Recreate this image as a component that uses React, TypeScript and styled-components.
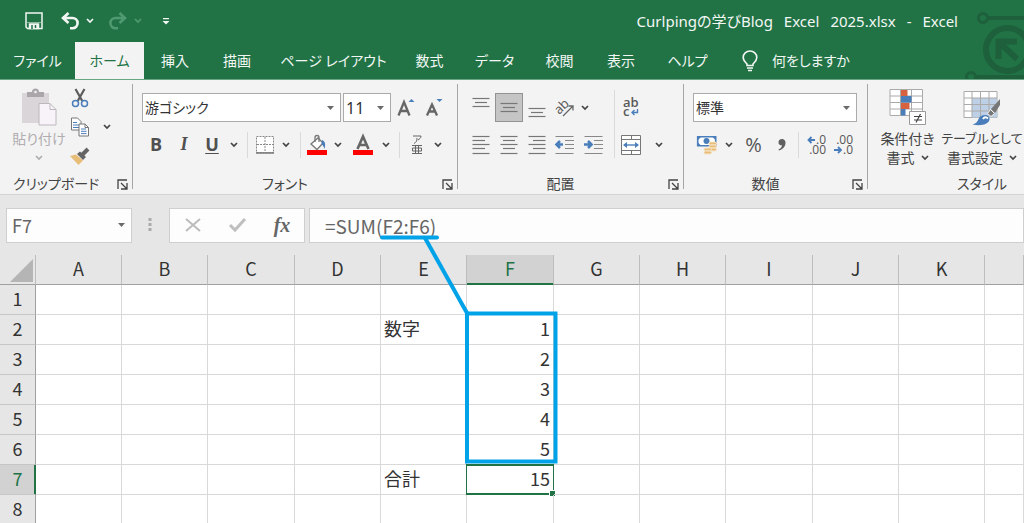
import React from "react";
import styled, { createGlobalStyle, css } from "styled-components";

const GREEN = "#217346";
const UI_FONT = `"Noto Sans", "Noto Sans CJK JP", sans-serif`;
const SHEET_FONT = `"Noto Sans CJK JP", sans-serif`;

const GlobalStyle = createGlobalStyle`
  *, *::before, *::after { box-sizing: border-box; }
  body { margin: 0; font-family: ${UI_FONT}; font-size: 14px; color: #333; }
  button, input, select { font: inherit; color: inherit; font-feature-settings: inherit; }
`;

const Window = styled.div`
  position: relative;
  display: flex;
  flex-direction: column;
  height: 100vh;
  overflow: hidden;
  background: #fff;
  font-feature-settings: "palt";
`;

/* ---------- header ---------- */

const Header = styled.header`
  position: relative;
  flex: none;
  background: ${GREEN};
  color: #f2f7f4;
  border-bottom: 1px solid #6aa583;
`;

const Decoration = styled.svg`
  position: absolute;
  right: 0;
  top: 0;
`;

const TitleBar = styled.div`
  display: flex;
  align-items: center;
  gap: 8px;
  height: 42px;
  padding: 0 66px 0 16px;
`;

const SplitButton = styled.div`
  display: flex;
  height: 100%;
`;

const DocumentTitle = styled.h1`
  display: flex;
  gap: 11px;
  margin: 0 0 0 auto;
  font-size: 15px;
  line-height: 20px;
  font-weight: 400;
  white-space: nowrap;
`;

const TabRow = styled.nav`
  position: relative;
  display: flex;
  height: 37px;
`;

const Tab = styled.button<{ $width: number; $active?: boolean }>`
  width: ${(p) => p.$width}px;
  padding: 0;
  border: 0;
  background: ${(p) => (p.$active ? "#f3f3f3" : "transparent")};
  color: ${(p) => (p.$active ? GREEN : "inherit")};
  line-height: 20px;
  white-space: nowrap;
`;

const TellMe = styled.button`
  display: flex;
  align-items: center;
  gap: 14px;
  margin-left: 19px;
  padding: 0;
  border: 0;
  background: transparent;
  line-height: 20px;
`;

/* ---------- ribbon ---------- */

const Ribbon = styled.section`
  flex: none;
  display: flex;
  height: 115px;
  padding-top: 4px;
  background: #f3f3f3;
  border-bottom: 1px solid #d4d4d4;
  overflow: hidden;
`;

const Group = styled.div<{ $width: number }>`
  flex: none;
  display: flex;
  flex-direction: column;
  justify-content: space-between;
  width: ${(p) => p.$width}px;
  padding: 4px 0 1px;
`;

const GroupDivider = styled.div`
  flex: none;
  width: 1px;
  height: 105px;
  background: #a6a6a6;
`;

const GroupFooter = styled.div<{ $launcher: boolean }>`
  display: grid;
  grid-template-columns: ${(p) => (p.$launcher ? "1fr 20px" : "1fr")};
  align-items: center;
  height: 18px;
  line-height: 18px;
  text-align: center;
  white-space: nowrap;
  color: #444;
`;

const Stack = styled.div<{ $left?: number }>`
  display: flex;
  flex-direction: column;
  gap: 10px;
  padding: 5px 0 0 ${(p) => p.$left ?? 9}px;
`;

const Row = styled.div<{ $height?: number; $gap?: number }>`
  display: flex;
  align-items: center;
  gap: ${(p) => p.$gap ?? 0}px;
  height: ${(p) => p.$height ?? 26}px;
`;

const Columns = styled.div`
  display: flex;
`;

const ToolButton = styled.button<{ $width: number; $pressed?: boolean }>`
  flex: none;
  display: flex;
  align-items: center;
  justify-content: center;
  width: ${(p) => p.$width}px;
  height: 100%;
  padding: 0;
  border: 0;
  background: transparent;
  color: #505050;
  ${(p) =>
    p.$pressed &&
    css`
      background: #c5c5c5;
      border: 1px solid #929292;
    `}

  > svg {
    flex: none;
    overflow: visible;
  }
`;

const Letter = styled.span<{ $italic?: boolean; $underline?: boolean }>`
  padding-bottom: 2px;
  font-family: "Open Sans", sans-serif;
  font-size: 18px;
  line-height: 22px;
  font-weight: 700;
  ${(p) => p.$italic && `font-family: "Liberation Serif", serif; font-style: italic;`}
  ${(p) => p.$underline && "text-decoration: underline; text-underline-offset: 2px;"}
`;

const ToolDivider = styled.span<{ $height?: number }>`
  flex: none;
  align-self: flex-end;
  width: 1px;
  height: ${(p) => p.$height ?? 26}px;
  margin: 0 5px;
  background: #dadada;
`;

const SelectBox = styled.label<{ $width: number }>`
  display: grid;
  align-items: center;
  width: ${(p) => p.$width}px;
  height: 29px;
  background: #fff;
  border: 1px solid #ababab;
  color: #333;

  > * {
    grid-area: 1 / 1;
  }
  > svg {
    justify-self: end;
    margin-right: 6px;
    pointer-events: none;
  }
`;

const Select = styled.select<{ $large?: boolean }>`
  appearance: none;
  width: 100%;
  height: 100%;
  padding: 0 2px;
  border: 0;
  background: transparent;
  font-size: ${(p) => (p.$large ? 16 : 14)}px;
`;

const BigButton = styled.button<{ $width: number; $disabled?: boolean }>`
  flex: none;
  display: flex;
  flex-direction: column;
  align-items: center;
  width: ${(p) => p.$width}px;
  padding: 0;
  border: 0;
  background: transparent;
  line-height: 19px;
  color: ${(p) => (p.$disabled ? "#b0acb0" : "#444")};
  white-space: nowrap;

  > svg {
    margin-bottom: 3px;
  }
`;

const Caption = styled.span<{ $compact?: boolean }>`
  display: flex;
  align-items: center;
  gap: 6px;
  min-height: 19px;
  font-size: ${(p) => (p.$compact ? 13 : 14)}px;
`;

const ClipboardGroup = styled(Columns)`
  padding-left: 8px;
`;

const ClipboardTools = styled.div`
  display: flex;
  flex-direction: column;
`;

/* ---------- formula bar ---------- */

const FormulaBar = styled.section`
  flex: none;
  display: flex;
  align-items: center;
  height: 60px;
  padding-left: 6px;
  background: #e6e6e6;
  color: #666;
  font-family: ${SHEET_FONT};
`;

const FieldBox = styled.label<{ $width?: number }>`
  display: flex;
  align-items: center;
  ${(p) => (p.$width ? `flex: none; width: ${p.$width}px;` : "flex: 1; border-right: 0;")}
  height: 35px;
  background: #fdfdfd;
  border: 1px solid #cfcfcf;
  padding-right: 6px;
`;

const Field = styled.input<{ $indent: number; $large?: boolean }>`
  flex: 1;
  min-width: 0;
  height: 100%;
  padding: 0 0 0 ${(p) => p.$indent}px;
  border: 0;
  background: transparent;
  font-size: ${(p) => (p.$large ? 19 : 18)}px;
  font-feature-settings: normal;
`;

const Handle = styled.svg`
  flex: none;
  margin: 0 17px 0 16px;
`;

const FormulaButtons = styled.div`
  flex: none;
  display: flex;
  width: 136px;
  height: 35px;
  margin-right: 4px;
  background: #fdfdfd;
  border: 1px solid #cfcfcf;
`;

const FunctionGlyph = styled.span`
  font: italic 700 20px/24px "Liberation Serif", serif;
  color: #666;
`;

/* ---------- sheet ---------- */

const SheetArea = styled.main`
  flex: 1;
  min-height: 0;
  overflow: hidden;
  background: #fff;
`;

const Sheet = styled.table`
  width: 100%;
  table-layout: fixed;
  border-collapse: separate;
  border-spacing: 0;
  font-family: ${SHEET_FONT};
  font-size: 18px;
  line-height: 24px;
  font-feature-settings: normal;
  color: #333;
`;

const ColumnHead = styled.th<{ $active?: boolean }>`
  height: 30px;
  padding: 0 0 4px;
  font-weight: 400;
  background: ${(p) => (p.$active ? "#d2d2d2" : "#e6e6e6")};
  color: ${(p) => (p.$active ? GREEN : "#333")};
  border-right: 1px solid #bdbdbd;
  border-bottom: 1px solid ${(p) => (p.$active ? GREEN : "#a0a0a0")};
  ${(p) => p.$active && `box-shadow: inset 0 -1px ${GREEN};`}
`;

const Corner = styled.td`
  padding: 0 2px 2px 0;
  background: #e6e6e6;
  border-right: 1px solid #bdbdbd;
  border-bottom: 1px solid #a0a0a0;
  vertical-align: bottom;

  > svg {
    display: block;
    margin-left: auto;
  }
`;

const RowHead = styled.th<{ $active?: boolean }>`
  height: 30px;
  padding: 0 0 4px;
  font-weight: 400;
  background: ${(p) => (p.$active ? "#d2d2d2" : "#e6e6e6")};
  color: ${(p) => (p.$active ? GREEN : "#333")};
  border-right: 1px solid ${(p) => (p.$active ? GREEN : "#a0a0a0")};
  border-bottom: 1px solid #c6c6c6;
  ${(p) => p.$active && `box-shadow: inset -1px 0 ${GREEN};`}
`;

const Cell = styled.td<{ $number?: boolean; $selected?: boolean }>`
  position: relative;
  height: 30px;
  padding: 0 3px 4px;
  text-align: ${(p) => (p.$number ? "right" : "left")};
  border-right: 1px solid #d9d9d9;
  border-bottom: 1px solid #d9d9d9;
  ${(p) =>
    p.$selected &&
    css`
      &::before {
        content: "";
        position: absolute;
        inset: -1px;
        border: 2px solid ${GREEN};
        border-width: 2px 1px;
      }
      &::after {
        content: "";
        position: absolute;
        right: -2px;
        bottom: -2px;
        width: 5px;
        height: 5px;
        background: ${GREEN};
        outline: 1px solid #fff;
      }
    `}
`;

const Annotation = styled.svg`
  position: absolute;
  left: 0;
  top: 0;
  pointer-events: none;
`;

/* ---------- icons ---------- */

const Chevron = ({ color = "#444" }: { color?: string }) => (
  <svg width="8" height="6" viewBox="0 0 8 6" fill="none" stroke={color} strokeWidth="1.7">
    <path d="M1 1l3 3 3-3" />
  </svg>
);

const Triangle = () => (
  <svg width="7" height="4" viewBox="0 0 7 4" fill="#6a6a6a">
    <path d="M0 0h7L3.500 4z" />
  </svg>
);

const SaveIcon = () => (
  <svg width="18" height="18" viewBox="0 0 18 18" fill="none" stroke="#f2f7f4" strokeWidth="1.500">
    <path d="M1 1h16v15.500H2.500L1 15z" />
    <path d="M2 10h14v1H2z" strokeWidth="1" stroke="none" fill="#8fb9a1" />
    <path d="M4.500 12h9v4.500h-9z" fill="#f2f7f4" />
    <path d="M7 13v4M10.500 13v3" stroke={GREEN} />
  </svg>
);

const UndoIcon = ({ color, flip }: { color: string; flip?: boolean }) => (
  <svg width="20" height="18" viewBox="0 0 20 18" fill="none" stroke={color} strokeWidth="2.600">
    <g transform={flip ? "matrix(-1 0 0 1 20 0)" : undefined}>
      <path d="M8.500 1L3 6l5.500 5M3 6h9.500a5 5 0 0 1 0 10.200H10" />
    </g>
  </svg>
);

const BulbIcon = () => (
  <svg width="16" height="22" viewBox="0 0 16 22" fill="none" stroke="#f2f7f4" strokeWidth="1.600">
    <path d="M5 15.500V14C3 12 1.200 10.500 1.200 7.500a6.800 6.500 0 0 1 13.600 0C14.800 10.500 13 12 11 14v1.500zM5 18h6M6 20.500h4" />
  </svg>
);

const PasteIcon = () => (
  <svg width="36" height="38" viewBox="0 0 36 38">
    <path d="M1 5h27v30H1z" fill="#d9d5d9" />
    <path d="M6 9V4h5a3.500 3.500 0 0 1 7 0h5v5z" fill="#aaa6aa" />
    <circle cx="14.500" cy="4" r="1.300" fill="#f3f3f3" />
    <path d="M18 15.500h11l6 6V37H18z" fill="#f8f3f9" stroke="#bcb8bc" />
    <path d="M29 15.500v6h6" fill="none" stroke="#bcb8bc" />
  </svg>
);

const CutIcon = () => (
  <svg width="18" height="20" viewBox="0 0 18 20" fill="none">
    <path d="M4.500 1l6.800 12M13.500 1L6.700 13" stroke="#5c5c5c" strokeWidth="2.200" />
    <circle cx="4.500" cy="15.500" r="3" stroke="#4a7ebb" strokeWidth="1.500" />
    <circle cx="13.500" cy="15.500" r="3" stroke="#4a7ebb" strokeWidth="1.500" />
  </svg>
);

const CopyIcon = () => (
  <svg width="18" height="20" viewBox="0 0 18 20" fill="#fff" stroke="#777">
    <path d="M.5 1h6l3.500 3.500V13H.5z" />
    <path d="M2 5.500h4M2 8h6M2 10.500h6" stroke="#4a7ebb" />
    <path d="M8 7h6l3.500 3.500V19H8z" />
    <path d="M14 7v3.500h3.500" fill="none" />
    <path d="M10 12h5M10 14.300h5.500M10 16.600h5.500" stroke="#4a7ebb" />
  </svg>
);

const BrushIcon = () => (
  <svg width="20" height="18" viewBox="0 0 20 18">
    <path d="M0 9l6-1.500 7 6L8.500 18z" fill="#e8bd78" />
    <path d="M7 7l3-2.500 6 5.500-3 3z" fill="#646464" />
    <path d="M12 8l6-6" stroke="#646464" strokeWidth="4" />
  </svg>
);

const LauncherIcon = () => (
  <svg width="11" height="11" viewBox="0 0 11 11" fill="none" stroke="#444" strokeWidth="1.300">
    <path d="M1 10V1h9M4 4l5.500 5.500M10 4v6H4" />
  </svg>
);

const BordersIcon = () => (
  <svg width="18" height="18" viewBox="0 0 18 18" fill="none" stroke="#888">
    <path d="M.5.500h17v16H.5zM9 1v15M1 8.500h16" fill="#fff" strokeDasharray="2 1" />
    <path d="M0 17h18" stroke="#777" strokeWidth="1.500" />
  </svg>
);

const FillIcon = () => (
  <svg width="20" height="20" viewBox="0 0 20 20" fill="none">
    <path d="M4 9l7-6 5 5-6 6.500z" fill="#fff" stroke="#777" strokeWidth="1.300" />
    <path d="M8 7V2.500a2 2 0 0 1 4 0V7" stroke="#777" strokeWidth="1.300" />
    <path d="M15 5c3 1 4 4 2.500 9-1-3-2-4-3-5z" fill="#4a7ebb" />
    <path d="M0 15h20v5H0z" fill="#f00" />
  </svg>
);

const FontColorIcon = () => (
  <svg width="20" height="20" viewBox="0 0 20 20">
    <path d="M4.500 14L10 1.500 15.500 14M6.500 10h7" fill="none" stroke="#666" strokeWidth="2.600" />
    <path d="M0 15h20v5H0z" fill="#f00" />
  </svg>
);

const FontSizeIcon = ({ grow }: { grow?: boolean }) => (
  <svg width="18" height="20" viewBox="0 0 18 20">
    <path
      d={grow ? "M1.500 17.500L7 4l5.500 13.500M3.500 13h7" : "M2 17.500L7 6.500l5 11M4 13.500h6"}
      fill="none"
      stroke="#666"
      strokeWidth="2.300"
    />
    <path d={grow ? "M11.500 4h6l-3-3z" : "M11.500 1h6l-3 3z"} fill="#4a7ebb" />
  </svg>
);

const PhoneticIcon = () => (
  <svg width="12" height="20" viewBox="0 0 12 20" fill="none" stroke="#666">
    <path d="M2 1h8c0 2-1.500 3-3 4M6 3c0 3-.5 4-3 5.500M1 10.500h10M1 18.500h10M1.500 13h9v3h-9zM4.500 10.500v8M7.500 10.500v8" />
  </svg>
);

type Line = [number, number, number];

const LinesIcon = ({ lines }: { lines: Line[] }) => (
  <svg width="18" height="20" viewBox="0 0 18 20" fill="none" stroke="#777" strokeWidth="1.200">
    {lines.map(([x1, x2, y]) => (
      <path key={y} d={`M${x1} ${y}H${x2}`} />
    ))}
  </svg>
);

const paragraph = (x1: number, x2: number): Line[] =>
  [1.5, 5.5, 9.5, 13.5, 18.5].map((y, i) => (i % 2 ? [x1, x2, y] : [0.5, 17.5, y]));

const IndentIcon = ({ increase }: { increase?: boolean }) => (
  <svg width="20" height="20" viewBox="0 0 20 20" fill="none" stroke="#888" strokeWidth="1.200">
    <path d="M.5 1.500h18M10 5.500h9M10 9.500h9M10 13.500h9M.5 18.500h18" />
    <path d={increase ? "M0 9.500h7M4 6l3.500 3.500L4 13" : "M1 9.500h7M5 6L1.500 9.500 5 13"} stroke="#4a7ebb" strokeWidth="2.600" />
  </svg>
);

const OrientationIcon = () => (
  <svg width="20" height="20" viewBox="0 0 20 20" fill="none" stroke="#666">
    <text x="0" y="13" transform="rotate(-45 7 10)" fontFamily="Open Sans" fontSize="13" fill="#555" stroke="none">
      ab
    </text>
    <path d="M8 18L18 8M13.500 8H18v4.500" strokeWidth="1.300" />
  </svg>
);

const WrapIcon = () => (
  <svg width="18" height="20" viewBox="0 0 18 20" fontFamily="Open Sans" fontSize="13" fontWeight="600" fill="#5a5a5a">
    <text x="1" y="9">ab</text>
    <text x="1" y="18">c</text>
    <path d="M15.500 11v3.500H10M12.500 12L10 14.500l2.500 2.500" fill="none" stroke="#4a7ebb" strokeWidth="1.400" />
  </svg>
);

const MergeIcon = () => (
  <svg width="20" height="20" viewBox="0 0 20 20" fill="#fff" stroke="#777">
    <path d="M.5.500h19v19H.5zM.5 4.500h19M.5 15.500h19M10.500.500v4M10.500 15.500v4" />
    <path d="M3 10h14" stroke="#4a7ebb" strokeWidth="1.400" />
    <path d="M2 10l4-3v6zM18 10l-4-3v6z" fill="#4a7ebb" stroke="none" />
  </svg>
);

const CurrencyIcon = () => (
  <svg width="20" height="20" viewBox="0 0 20 20">
    <path d="M.7 1.700h18v9H.7z" fill="#fff" stroke="#4a7ebb" strokeWidth="1.600" />
    <path d="M1 2h3L1 5zM18.500 2h-3l3 3zM1 10.500h3l-3-3z" fill="#4a7ebb" />
    <circle cx="9.500" cy="6" r="3" fill="#4a7ebb" />
    <g fill="#e8bd78" stroke="#f7e6cb">
      <rect x="12" y="7" width="7.500" height="3" rx="1.500" />
      <rect x="12" y="10" width="7.500" height="3" rx="1.500" />
      <rect x="12" y="13" width="7.500" height="3" rx="1.500" />
      <rect x="7" y="13" width="7.500" height="3" rx="1.500" />
      <rect x="7" y="16" width="7.500" height="3" rx="1.500" />
    </g>
  </svg>
);

const PercentGlyph = styled.span`
  font: 400 20px/24px "Open Sans", sans-serif;
  color: #555;
`;

const CommaIcon = () => (
  <svg width="8" height="12" viewBox="0 0 8 12" fill="#606060">
    <path d="M4 0a3.500 3.500 0 0 0-3.500 3.500C.5 5.500 2 6.500 4 6.300 3.700 8.500 2.500 9.700.5 10.500l.5 1C5 10.300 7.500 7.500 7.500 3.800 7.500 1.500 6 0 4 0z" />
  </svg>
);

const DecimalIcon = ({ increase }: { increase?: boolean }) => (
  <svg width="20" height="20" viewBox="0 0 20 20" fontFamily="Open Sans" fontSize="12" fill="#555">
    <text x="19" y="9" textAnchor="end">{increase ? ".0" : ".00"}</text>
    <text x="19" y="19" textAnchor="end">{increase ? ".00" : ".0"}</text>
    <path
      d={increase ? "M1 5h7M4.500 2L1.500 5l3 3" : "M0 15h7M4 12l3 3-3 3"}
      fill="none"
      stroke="#4a7ebb"
      strokeWidth="1.800"
    />
  </svg>
);

const ConditionalIcon = () => (
  <svg width="38" height="38" viewBox="0 0 38 38" fill="none" stroke="#aaa">
    <path d="M1 1.500h32.500v26H1z" fill="#fff" />
    <path d="M1 8h32M1 14.500h32M1 21h32M11.500 1v26M22.500 1v26" />
    <path d="M12 2h6.500v6H12zM12 15h8.500v6H12z" fill="#d6623f" stroke="none" />
    <path d="M12 8h10.500v6.500H12zM12 21h4.500v6.500H12z" fill="#4a7ebb" stroke="none" />
    <path d="M20.500 23.500h16v13h-16z" fill="#fff" stroke="#999" />
    <path d="M25 28.500h8M25 32h8M31.500 26l-4.500 8.500" stroke="#444" strokeWidth="1.200" />
  </svg>
);

const TableStyleIcon = () => (
  <svg width="38" height="38" viewBox="0 0 38 38" fill="none" stroke="#aaa">
    <path d="M1 3.500h33v26H1z" fill="#fff" />
    <path d="M9 10h25v19.500H9z" fill="#bdd0e6" stroke="none" />
    <path d="M1 10h33M1 16.500h33M1 23h33M9 3v26M17.500 3v26M26 3v26" />
    <path d="M37 11l-9 10 4 4 5-8z" fill="#777" stroke="none" />
    <path d="M27.500 21.500l-3 4 3.500 3 3.500-3z" fill="#777" stroke="#f3f3f3" />
    <path d="M22 27c3 0 5 2 4.500 4.500C25.500 37 17 38 9.500 36.500c4-1 5-3 6-5.500 1-3 3.500-4 6.500-4z" fill="#4a7ebb" stroke="none" />
    <path d="M20 31c1-2 3-2.500 5-.5" stroke="#fff" strokeWidth="1.800" />
  </svg>
);

/* ---------- data ---------- */

const TITLE_PARTS = ["Curlpingの学びBlog", "Excel", "2025.xlsx", "-", "Excel"];

const TABS = [
  { label: "ファイル", width: 75 },
  { label: "ホーム", width: 69 },
  { label: "挿入", width: 62 },
  { label: "描画", width: 62 },
  { label: "ページ レイアウト", width: 131 },
  { label: "数式", width: 61 },
  { label: "データ", width: 69 },
  { label: "校閲", width: 61 },
  { label: "表示", width: 62 },
  { label: "ヘルプ", width: 71 },
];

const COLUMNS = [
  { name: "A", width: 86 },
  { name: "B", width: 86 },
  { name: "C", width: 87 },
  { name: "D", width: 86 },
  { name: "E", width: 86 },
  { name: "F", width: 87 },
  { name: "G", width: 86 },
  { name: "H", width: 86 },
  { name: "I", width: 87 },
  { name: "J", width: 86 },
  { name: "K", width: 86 },
];

const ROWS = [1, 2, 3, 4, 5, 6, 7, 8];

const VALUES: Record<string, string | number> = {
  E2: "数字",
  F2: 1,
  F3: 2,
  F4: 3,
  F5: 4,
  F6: 5,
  E7: "合計",
  F7: 15,
};

const Footer = ({ name, launcher = true }: { name: string; launcher?: boolean }) => (
  <GroupFooter $launcher={launcher}>
    <span>{name}</span>
    {launcher && (
      <ToolButton $width={20} aria-label={`${name}の設定`}>
        <LauncherIcon />
      </ToolButton>
    )}
  </GroupFooter>
);

const Drop = ({ width, label, color }: { width: number; label: string; color?: string }) => (
  <ToolButton $width={width} aria-label={label}>
    <Chevron color={color} />
  </ToolButton>
);

export default function App() {
  return (
    <Window>
      <GlobalStyle />
      <Header>
        <Decoration width="62" height="79" viewBox="0 0 62 79" fill="none" stroke="#1d603b" strokeWidth="4">
          <circle cx="21" cy="18" r="4.500" strokeWidth="3" />
          <path d="M26 18h36M14 77h48" />
          <circle cx="9" cy="77" r="4.500" strokeWidth="3" />
          <circle cx="45.500" cy="49.500" r="21.500" strokeWidth="6" />
          <path d="M36.500 59V41.500H55M37 42l18 17" strokeWidth="6" />
        </Decoration>
        <TitleBar>
          <ToolButton $width={36} aria-label="上書き保存"><SaveIcon /></ToolButton>
          <SplitButton>
            <ToolButton $width={20} aria-label="元に戻す"><UndoIcon color="#f2f7f4" /></ToolButton>
            <Drop width={20} label="元に戻す操作の選択" color="#f2f7f4" />
          </SplitButton>
          <SplitButton>
            <ToolButton $width={20} aria-label="やり直し"><UndoIcon color="#4f9a70" flip /></ToolButton>
            <Drop width={20} label="やり直す操作の選択" color="#4f9a70" />
          </SplitButton>
          <ToolButton $width={20} aria-label="クイック アクセス ツール バーのユーザー設定">
            <svg width="8" height="7" viewBox="0 0 8 7" fill="#f2f7f4">
              <path d="M1 0h6v1.300H1zM.500 3h7L4 6.500z" />
            </svg>
          </ToolButton>
          <DocumentTitle>
            {TITLE_PARTS.map((part, i) => (
              <span key={i}>{part}</span>
            ))}
          </DocumentTitle>
        </TitleBar>
        <TabRow>
          {TABS.map((t) => (
            <Tab key={t.label} $width={t.width} $active={t.label === "ホーム"}>
              {t.label}
            </Tab>
          ))}
          <TellMe>
            <BulbIcon />
            何をしますか
          </TellMe>
        </TabRow>
      </Header>

      <Ribbon>
        <Group $width={132}>
          <ClipboardGroup>
            <BigButton $width={62} $disabled>
              <PasteIcon />
              <Caption>貼り付け</Caption>
              <Caption><Chevron color="#b0acb0" /></Caption>
            </BigButton>
            <ClipboardTools>
              <Row $height={20}>
                <ToolButton $width={20} aria-label="切り取り"><CutIcon /></ToolButton>
              </Row>
              <Row $height={38}>
                <ToolButton $width={20} aria-label="コピー"><CopyIcon /></ToolButton>
                <Drop width={34} label="コピーのオプション" />
              </Row>
              <Row $height={20}>
                <ToolButton $width={20} aria-label="書式のコピー"><BrushIcon /></ToolButton>
              </Row>
            </ClipboardTools>
          </ClipboardGroup>
          <Footer name="クリップボード" />
        </Group>
        <GroupDivider />

        <Group $width={324}>
          <Stack>
            <Row $height={29} $gap={2}>
              <SelectBox $width={199}>
                <Select aria-label="フォント"><option>游ゴシック</option></Select>
                <Triangle />
              </SelectBox>
              <SelectBox $width={48}>
                <Select $large aria-label="フォント サイズ"><option>11</option></Select>
                <Triangle />
              </SelectBox>
              <ToolButton $width={26} aria-label="フォント サイズの拡大"><FontSizeIcon grow /></ToolButton>
              <ToolButton $width={26} aria-label="フォント サイズの縮小"><FontSizeIcon /></ToolButton>
            </Row>
            <Row>
              <ToolButton $width={28} aria-label="太字"><Letter>B</Letter></ToolButton>
              <ToolButton $width={28} aria-label="斜体"><Letter $italic>I</Letter></ToolButton>
              <ToolButton $width={28} aria-label="下線"><Letter $underline>U</Letter></ToolButton>
              <Drop width={16} label="下線の種類" />
              <ToolDivider />
              <ToolButton $width={24} aria-label="罫線"><BordersIcon /></ToolButton>
              <Drop width={18} label="罫線の種類" />
              <ToolDivider />
              <ToolButton $width={22} aria-label="塗りつぶしの色"><FillIcon /></ToolButton>
              <Drop width={20} label="塗りつぶしの色の選択" />
              <ToolButton $width={30} aria-label="フォントの色"><FontColorIcon /></ToolButton>
              <Drop width={16} label="フォントの色の選択" />
              <ToolDivider />
              <ToolButton $width={24} aria-label="ふりがな"><PhoneticIcon /></ToolButton>
              <Drop width={18} label="ふりがなの設定" />
            </Row>
          </Stack>
          <Footer name="フォント" />
        </Group>
        <GroupDivider />

        <Group $width={225}>
          <Columns>
            <Stack>
              <Row $height={29}>
                <ToolButton $width={28} aria-label="上揃え">
                  <LinesIcon lines={[[0.5, 17.5, 0.5], [3, 15, 4.5], [0.5, 17.5, 8.5]]} />
                </ToolButton>
                <ToolButton $width={28} $pressed aria-label="上下中央揃え">
                  <LinesIcon lines={[[0.5, 17.5, 5.5], [3, 15, 9.5], [0.5, 17.5, 13.5]]} />
                </ToolButton>
                <ToolButton $width={28} aria-label="下揃え">
                  <LinesIcon lines={[[0.5, 17.5, 10.5], [3, 15, 14.5], [0.5, 17.5, 18.5]]} />
                </ToolButton>
                <ToolButton $width={28} aria-label="方向"><OrientationIcon /></ToolButton>
                <Drop width={12} label="方向の選択" />
              </Row>
              <Row>
                <ToolButton $width={28} aria-label="左揃え"><LinesIcon lines={paragraph(0.5, 13)} /></ToolButton>
                <ToolButton $width={28} aria-label="中央揃え"><LinesIcon lines={paragraph(3, 15)} /></ToolButton>
                <ToolButton $width={28} aria-label="右揃え"><LinesIcon lines={paragraph(5, 17.5)} /></ToolButton>
                <ToolButton $width={28} aria-label="インデントを減らす"><IndentIcon /></ToolButton>
                <ToolButton $width={30} aria-label="インデントを増やす"><IndentIcon increase /></ToolButton>
              </Row>
            </Stack>
            <ToolDivider $height={68} />
            <Stack $left={1}>
              <Row $height={29}>
                <ToolButton $width={20} aria-label="折り返して全体を表示する"><WrapIcon /></ToolButton>
              </Row>
              <Row>
                <ToolButton $width={20} aria-label="セルを結合して中央揃え"><MergeIcon /></ToolButton>
                <Drop width={36} label="結合の種類" />
              </Row>
            </Stack>
          </Columns>
          <Footer name="配置" />
        </Group>
        <GroupDivider />

        <Group $width={183}>
          <Stack>
            <Row $height={29}>
              <SelectBox $width={164}>
                <Select aria-label="数値の書式"><option>標準</option></Select>
                <Triangle />
              </SelectBox>
            </Row>
            <Row>
              <ToolButton $width={28} aria-label="通貨表示形式"><CurrencyIcon /></ToolButton>
              <Drop width={16} label="通貨の選択" />
              <ToolButton $width={33} aria-label="パーセント スタイル"><PercentGlyph>%</PercentGlyph></ToolButton>
              <ToolButton $width={23} aria-label="桁区切りスタイル"><CommaIcon /></ToolButton>
              <ToolDivider />
              <ToolButton $width={26} aria-label="小数点以下の表示桁数を増やす"><DecimalIcon increase /></ToolButton>
              <ToolButton $width={28} aria-label="小数点以下の表示桁数を減らす"><DecimalIcon /></ToolButton>
            </Row>
          </Stack>
          <Footer name="数値" />
        </Group>
        <GroupDivider />

        <Group $width={228}>
          <Columns>
            <BigButton $width={79}>
              <ConditionalIcon />
              <Caption>条件付き</Caption>
              <Caption>書式 <Chevron /></Caption>
            </BigButton>
            <BigButton $width={70}>
              <TableStyleIcon />
              <Caption $compact>テーブルとして</Caption>
              <Caption>書式設定 <Chevron /></Caption>
            </BigButton>
          </Columns>
          <Footer name="スタイル" launcher={false} />
        </Group>
      </Ribbon>

      <FormulaBar>
        <FieldBox $width={126}>
          <Field $indent={5} defaultValue="F7" aria-label="名前ボックス" />
          <Triangle />
        </FieldBox>
        <Handle width="4" height="14" viewBox="0 0 4 14" fill="#aaa">
          <path d="M.5 0h3v3h-3zM.5 5h3v3h-3zM.5 10h3v3h-3z" />
        </Handle>
        <FormulaButtons>
          <ToolButton $width={45} aria-label="キャンセル">
            <svg width="16" height="14" viewBox="0 0 16 14" fill="none" stroke="#bbb" strokeWidth="2">
              <path d="M1 1l14 12M15 1L1 13" />
            </svg>
          </ToolButton>
          <ToolButton $width={45} aria-label="入力">
            <svg width="17" height="14" viewBox="0 0 17 14" fill="none" stroke="#bfbfbf" strokeWidth="3">
              <path d="M1 7l5 5L16 1" />
            </svg>
          </ToolButton>
          <ToolButton $width={44} aria-label="関数の挿入"><FunctionGlyph>fx</FunctionGlyph></ToolButton>
        </FormulaButtons>
        <FieldBox>
          <Field $large $indent={15} defaultValue="=SUM(F2:F6)" aria-label="数式バー" />
        </FieldBox>
      </FormulaBar>

      <SheetArea>
        <Sheet>
          <colgroup>
            <col width={36} />
            {COLUMNS.map((c) => (
              <col key={c.name} width={c.width} />
            ))}
            <col />
          </colgroup>
          <thead>
            <tr>
              <Corner>
                <svg width="24" height="23" viewBox="0 0 24 23" fill="#b5b5b5">
                  <path d="M24 0v23H1z" />
                </svg>
              </Corner>
              {COLUMNS.map((c) => (
                <ColumnHead key={c.name} scope="col" $active={c.name === "F"}>
                  {c.name}
                </ColumnHead>
              ))}
              <ColumnHead />
            </tr>
          </thead>
          <tbody>
            {ROWS.map((row) => (
              <tr key={row}>
                <RowHead scope="row" $active={row === 7}>{row}</RowHead>
                {COLUMNS.map((c) => {
                  const value = VALUES[c.name + row];
                  return (
                    <Cell
                      key={c.name}
                      $number={typeof value === "number"}
                      $selected={c.name === "F" && row === 7}
                    >
                      {value}
                    </Cell>
                  );
                })}
                <Cell />
              </tr>
            ))}
          </tbody>
        </Sheet>
      </SheetArea>

      <Annotation width="600" height="480" viewBox="0 0 600 480" fill="none" stroke="#00a2e8" strokeWidth="4">
        <path d="M382 237.500h55" strokeLinecap="round" />
        <path d="M425 238l42 75" />
        <path d="M467 313.500h88.500v148H467z" />
      </Annotation>
    </Window>
  );
}
